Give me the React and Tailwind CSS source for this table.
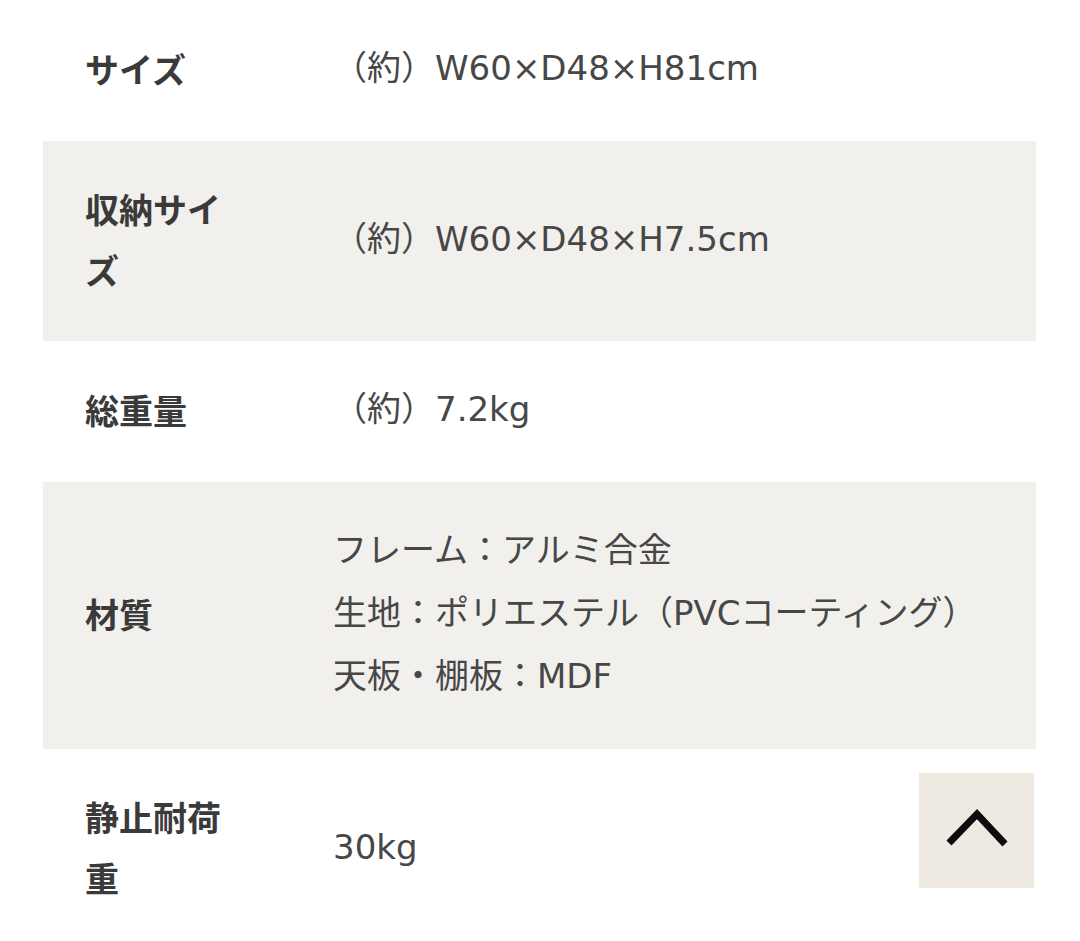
import React from 'react';

const specs = [
  { label: 'サイズ', value: ['（約）W60×D48×H81cm'] },
  { label: '収納サイズ', value: ['（約）W60×D48×H7.5cm'] },
  { label: '総重量', value: ['（約）7.2kg'] },
  {
    label: '材質',
    value: ['フレーム：アルミ合金', '生地：ポリエステル（PVCコーティング）', '天板・棚板：MDF'],
  },
  { label: '静止耐荷重', value: ['30kg'] },
];

const App = () => {
  return (
    <div
      className="relative bg-white min-h-[941px] pl-[43px] pr-[44px] overflow-hidden"
      style={{ fontFamily: '"Noto Sans CJK JP", "Noto Sans", sans-serif' }}
    >
      {specs.map((row, i) => (
        <div
          key={row.label}
          className={`flex items-center py-[39px] pl-[42px] ${i % 2 === 1 ? 'bg-[#f2f0ec]' : 'bg-white'}`}
        >
          {/* label */}
          <div className="w-[150px] shrink-0 text-[34px] leading-[61px] font-bold text-[#3a3a3a] -translate-y-[2px]">
            {row.label}
          </div>
          {/* value */}
          <div
            className="ml-[98px] flex-1 text-[34px] leading-[63px] text-[#474747] -translate-y-[2px]"
            style={{ fontFamily: '"DejaVu Sans", "Noto Sans CJK JP", sans-serif' }}
          >
            {row.value.map((line) => (
              <div key={line}>{line}</div>
            ))}
          </div>
        </div>
      ))}

      {/* back to top */}
      <button className="absolute left-[919px] top-[773px] w-[115px] h-[115px] bg-[#eeeae2] flex items-center justify-center">
        <svg width="70" height="50" viewBox="0 0 70 50" fill="none">
          <path d="M7 37 L35 8 L63 38" stroke="#0d0d0d" strokeWidth="7" strokeLinejoin="miter" />
        </svg>
      </button>
    </div>
  );
};

export default App;
